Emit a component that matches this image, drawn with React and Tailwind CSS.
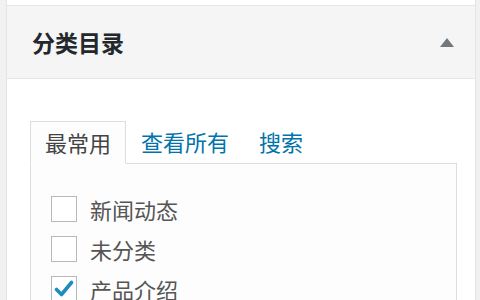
import React from "react";

const font = { fontFamily: '"Noto Sans CJK SC", "Noto Sans", sans-serif' };

function Check({ checked }) {
  return (
    <div className="w-[26px] h-[26px] border border-[#b4b9be] bg-white shrink-0 flex items-center justify-center">
      {checked && (
        <svg width="22" height="22" viewBox="0 0 22 22">
          <path d="M3.5 11.5 L8.5 16.5 L18.5 4.5" fill="none" stroke="#1e8cbe" strokeWidth="3.6" strokeLinecap="round" strokeLinejoin="round" />
        </svg>
      )}
    </div>
  );
}

export default function App() {
  const items = [
    { label: "新闻动态", checked: false },
    { label: "未分类", checked: false },
    { label: "产品介绍", checked: true },
  ];
  return (
    <div className="w-[480px] h-[300px] overflow-hidden bg-[#f1f1f1] flex pl-[6px] pr-[4px]" style={font}>
      <div className="flex-1 border-x border-[#e5e5e5] bg-white flex flex-col">
        <div className="h-[6px] shrink-0 bg-white border-b border-[#e5e5e5]" />
        <div className="h-[73px] shrink-0 bg-[#f5f5f5] border-b border-[#e5e5e5] flex items-center justify-between pl-[25px] pr-[21px]">
          <span className="text-[23px] font-semibold text-[#23282d] leading-none">分类目录</span>
          <svg width="14" height="9" viewBox="0 0 14 9">
            <polygon points="7,0 14,9 0,9" fill="#72777c" />
          </svg>
        </div>
        <div className="pt-[41px] pl-[23px] pr-[18px] flex flex-col">
          <div className="flex items-end">
            <div className="relative z-10 -mb-px h-[43px] px-[14px] border border-[#dddddd] border-b-[#fdfdfd] bg-[#fdfdfd] flex items-center text-[22px] text-[#444444]">
              最常用
            </div>
            <div className="h-[43px] px-[14px] border border-transparent flex items-center text-[22px] text-[#0073aa]">
              查看所有
            </div>
            <div className="h-[43px] px-[14px] border border-transparent flex items-center text-[22px] text-[#0073aa]">
              搜索
            </div>
          </div>
          <div className="border border-[#dddddd] bg-[#fdfdfd] h-[200px] px-[20px] pt-[32px] flex flex-col gap-[14px]">
            {items.map((it) => (
              <div key={it.label} className="flex items-center gap-[13px] h-[26px]">
                <Check checked={it.checked} />
                <span className="text-[22px] text-[#555555] leading-none">{it.label}</span>
              </div>
            ))}
          </div>
        </div>
      </div>
    </div>
  );
}
